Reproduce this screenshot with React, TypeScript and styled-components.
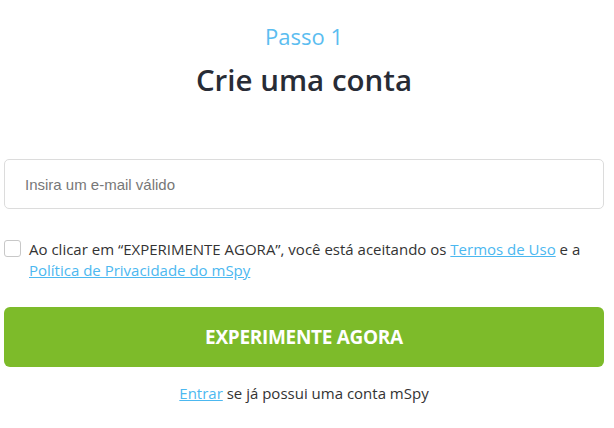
import React from "react";
import styled, { createGlobalStyle } from "styled-components";

const Global = createGlobalStyle`
  html, body { margin: 0; padding: 0; background: #fff; }
  body { font-family: "Open Sans", "Liberation Sans", sans-serif; }
`;

const Page = styled.div`
  width: 600px;
  padding: 0 0 0 4px;
  display: flex;
  flex-direction: column;
`;

const Step = styled.div`
  margin-top: 22px;
  text-align: center;
  font-size: 22px;
  line-height: 28px;
  color: #5bbdf0;
`;

const Title = styled.h1`
  margin: 10px 0 0;
  text-align: center;
  font-size: 29.5px;
  line-height: 40px;
  font-weight: 600;
  color: #282c36;
`;

const Input = styled.input`
  box-sizing: border-box;
  margin-top: 59px;
  width: 600px;
  height: 50px;
  border: 1px solid #dcdcdc;
  border-radius: 5px;
  padding: 0 20px;
  font-family: "Liberation Sans", Arial, sans-serif;
  font-size: 15px;
  outline: none;
  &::placeholder { color: #777; }
`;

const Consent = styled.label`
  margin-top: 30px;
  display: flex;
  align-items: flex-start;
  gap: 8px;
  font-size: 15px;
  line-height: 21px;
  color: #333;
`;

const Box = styled.span`
  flex: none;
  box-sizing: border-box;
  width: 17px;
  height: 17px;
  margin-top: 1px;
  border: 1px solid #c8c8c8;
  border-radius: 3px;
  background: #fff;
`;

const Link = styled.a`
  color: #4cb8f0;
  text-decoration: underline;
`;

const Button = styled.button`
  margin-top: 26px;
  width: 600px;
  height: 60px;
  border: none;
  border-radius: 6px;
  background: #7dbb2a;
  color: #fff;
  font-family: "Open Sans", sans-serif;
  font-weight: 700;
  font-size: 19px;
  letter-spacing: -0.3px;
`;

const Footer = styled.div`
  margin-top: 16px;
  text-align: center;
  font-size: 15px;
  line-height: 21px;
  color: #333;
`;

export default function App() {
  return (
    <>
      <Global />
      <Page>
        <Step>Passo 1</Step>
        <Title>Crie uma conta</Title>
        <Input placeholder="Insira um e-mail válido" />
        <Consent>
          <Box />
          <span>
            Ao clicar em “EXPERIMENTE AGORA”, você está aceitando os <Link href="#">Termos de Uso</Link> e a{" "}
            <Link href="#">Política de Privacidade do mSpy</Link>
          </span>
        </Consent>
        <Button>EXPERIMENTE AGORA</Button>
        <Footer>
          <Link href="#">Entrar</Link> se já possui uma conta mSpy
        </Footer>
      </Page>
    </>
  );
}
